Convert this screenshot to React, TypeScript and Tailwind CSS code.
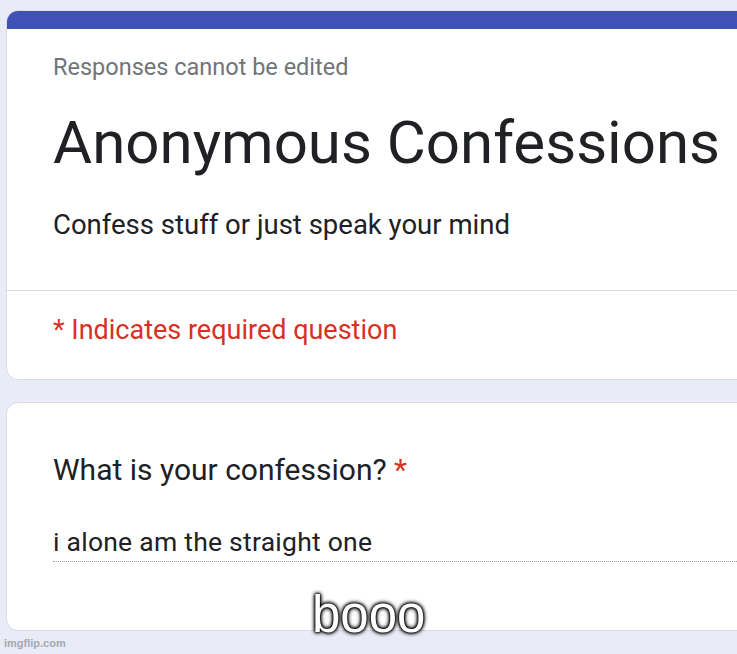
import React from "react";

const App = () => {
  return (
    <div className="relative h-[654px] w-[737px] overflow-hidden bg-[#e9ebf6] pl-[6px] pt-[10px] font-['Roboto',sans-serif]">
      <div className="w-[780px] overflow-hidden rounded-[12px] border border-[#dadce0] bg-white">
        <div className="h-[18px] bg-[#3f51b5]" />
        <div className="px-[46px] pt-[23px]">
          <p className="text-[23.5px] leading-[30px] text-[#70757a]">Responses cannot be edited</p>
          <h1 className="mt-[26px] text-[60px] leading-[70px] text-[#202124]">Anonymous Confessions</h1>
          <p className="mt-[30px] text-[27.5px] leading-[34px] text-[#202124]">Confess stuff or just speak your mind</p>
        </div>
        <div className="mt-[48px] border-t border-[#dadce0]" />
        <div className="px-[46px] pb-[33px] pt-[23px]">
          <p className="text-[27px] leading-[32px] text-[#d93025]">* Indicates required question</p>
        </div>
      </div>

      <div className="mt-[22px] w-[780px] rounded-[12px] border border-[#dadce0] bg-white px-[46px] pb-[68px] pt-[49px]">
        <p className="text-[30px] leading-[36px] text-[#202124]">
          What is your confession? <span className="text-[#d93025]">*</span>
        </p>
        <div className="mt-[38px] w-[684px] border-b border-dotted border-[#9aa0a6] pb-[3px]">
          <p className="text-[26.5px] leading-[32px] tracking-[0.25px] text-[#202124]">i alone am the straight one</p>
        </div>
      </div>

      <span className="absolute left-[312px] top-[585px] font-['Liberation_Sans',sans-serif] text-[51px] leading-[60px] text-white [text-shadow:0_0_2px_#000,0_0_3px_#000,0_0_4px_#000,0_0_5px_#000]">
        booo
      </span>
      <span className="absolute bottom-[3px] left-[4px] font-['Liberation_Sans',sans-serif] text-[11px] font-bold text-[#a5a8b0]">
        imgflip.com
      </span>
    </div>
  );
};

export default App;
